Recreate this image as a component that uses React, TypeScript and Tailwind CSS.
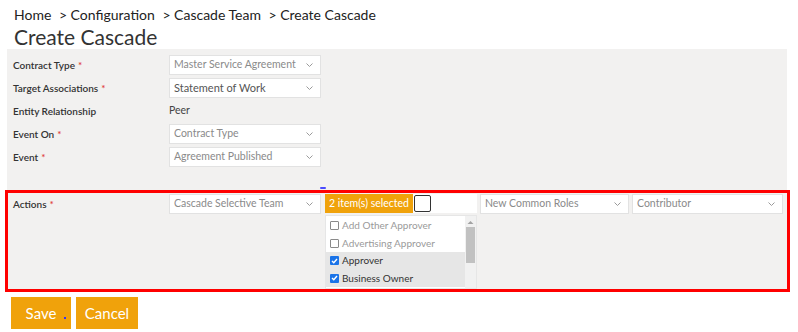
import { Fragment } from "react";

type Field = {
  label: string;
  required?: boolean;
  value: string;
  kind: "select" | "text";
  dark?: boolean;
};

const fields: Field[] = [
  { label: "Contract Type", required: true, value: "Master Service Agreement", kind: "select" },
  { label: "Target Associations", required: true, value: "Statement of Work", kind: "select", dark: true },
  { label: "Entity Relationship", value: "Peer", kind: "text" },
  { label: "Event On", required: true, value: "Contract Type", kind: "select" },
  { label: "Event", required: true, value: "Agreement Published", kind: "select" },
];

const options = [
  { name: "Add Other Approver", checked: false },
  { name: "Advertising Approver", checked: false },
  { name: "Approver", checked: true },
  { name: "Business Owner", checked: true },
];

const Chevron = ({ color = "#9a9a9a" }: { color?: string }) => (
  <svg width="7" height="4" viewBox="0 0 7 4" fill="none">
    <path d="M0.5 0.5 L3.5 3.5 L6.5 0.5" stroke={color} strokeWidth="1" />
  </svg>
);

const Select = ({ value, dark, width = "w-[152px]" }: { value: string; dark?: boolean; width?: string }) => (
  <div
    className={`flex h-[20px] ${width} items-center justify-between border border-[#e2e2e2] bg-white pl-[4px] pr-[7px]`}
  >
    <span
      className={`whitespace-nowrap ${dark ? "text-[11px] text-[#555]" : "text-[10.5px] text-[#8a8a8a]"}`}
    >
      {value}
    </span>
    <Chevron />
  </div>
);

const Label = ({ text, required }: { text: string; required?: boolean }) => (
  <span className="whitespace-nowrap text-[10px] font-semibold text-[#333]">
    {text}
    {required && <span className="ml-[3px] text-[#e0413b]">*</span>}
  </span>
);

const Checkbox = ({ checked }: { checked: boolean }) =>
  checked ? (
    <span className="flex h-[9px] w-[9px] items-center justify-center rounded-[1px] bg-[#1a73e8]">
      <svg width="7" height="6" viewBox="0 0 7 6">
        <path d="M1 3 L2.8 4.8 L6 1" stroke="white" strokeWidth="1.4" fill="none" />
      </svg>
    </span>
  ) : (
    <span className="h-[9px] w-[9px] rounded-[1px] border border-[#8a8a8a] bg-white" />
  );

const App = () => {
  return (
    <div
      className="relative h-[332px] w-[798px] overflow-hidden bg-white"
      style={{ fontFamily: 'Lato, "Noto Sans", sans-serif' }}
    >
      <div className="pl-[14px] pt-[5px]">
        <div className="whitespace-nowrap text-[14px] leading-[19px] text-[#222]">
          Home <span className="ml-[4px]">&gt; Configuration</span>{" "}
          <span className="ml-[4px]">&gt; Cascade Team</span> <span className="ml-[4px]">&gt; Create Cascade</span>
        </div>
        <div className="text-[21px] leading-[25px] text-[#333]">Create Cascade</div>
      </div>

      <div className="ml-[7px] w-[780px] bg-[#f2f1f0] pb-[24px] pt-[6px]">
        <div className="grid grid-cols-[156px_1fr] gap-y-[3px] pl-[6px]">
          {fields.map((f) => (
            <Fragment key={f.label}>
              <div className="flex h-[20px] items-center">
                <Label text={f.label} required={f.required} />
              </div>
              <div className="flex h-[20px] items-center">
                {f.kind === "select" ? (
                  <Select value={f.value} dark={f.dark} />
                ) : (
                  <span className="text-[10.5px] text-[#444]">{f.value}</span>
                )}
              </div>
            </Fragment>
          ))}
        </div>
      </div>

      <div className="absolute left-[320px] top-[187px] h-[2px] w-[6px] rounded-full bg-[#4a4aff]" />

      <div className="ml-[5px] -mt-[1px] h-[102px] w-[785px] border-[3px] border-[#ff0000] bg-[#f2f1f0]">
        <div className="flex items-start pl-[5px] pt-[1px]">
          <div className="flex h-[19px] w-[156px] items-center pt-[2px]">
            <Label text="Actions" required />
          </div>
          <Select value="Cascade Selective Team" />
          <div className="ml-[4px] flex w-[152px] flex-col">
            <div className="flex h-[19px] items-center bg-white">
              <div className="flex h-[19px] w-[88px] items-center justify-between bg-[#f0a20b] pl-[4px] pr-[6px]">
                <span className="whitespace-nowrap text-[10.5px] text-white">2 item(s) selected</span>
                <Chevron color="#fde3b0" />
              </div>
              <div className="ml-[1px] h-[17px] w-[17px] rounded-[2px] border border-[#333] bg-white" />
            </div>
            <div className="mt-[2px] flex h-[74px] border border-[#e6e6e6] bg-white">
              <div className="flex flex-1 flex-col justify-end pb-[1px]">
                {options.map((o) => (
                  <div
                    key={o.name}
                    className={`flex h-[17.5px] items-center gap-[3px] pl-[4px] ${o.checked ? "bg-[#e6e6e6]" : ""}`}
                  >
                    <Checkbox checked={o.checked} />
                    <span
                      className={`whitespace-nowrap text-[10px] ${o.checked ? "text-[#333]" : "text-[#9a9a9a]"}`}
                    >
                      {o.name}
                    </span>
                  </div>
                ))}
              </div>
              <div className="flex w-[11px] flex-col items-center bg-[#f1f1f1]">
                <svg width="7" height="5" viewBox="0 0 7 5" className="mt-[4px]">
                  <path d="M0.5 4 L3.5 1 L6.5 4 Z" fill="#a3a3a3" />
                </svg>
                <div className="mt-[2px] h-[36px] w-[9px] bg-[#c1c1c1]" />
              </div>
            </div>
          </div>
          <div className="ml-[3px]">
            <Select value="New Common Roles" width="w-[149px]" />
          </div>
          <div className="ml-[3px]">
            <Select value="Contributor" width="w-[151px]" />
          </div>
        </div>
      </div>

      <div className="ml-[11px] mt-[5px] flex gap-[5px]">
        <button className="relative h-[32px] w-[60px] bg-[#f0a20b] text-[15px] text-white">
          Save
          <span className="absolute bottom-[10px] right-[5px] h-[2px] w-[2px] bg-[#3333ff]" />
        </button>
        <button className="h-[32px] w-[62px] bg-[#f0a20b] text-[15px] text-white">Cancel</button>
      </div>
    </div>
  );
};

export default App;
